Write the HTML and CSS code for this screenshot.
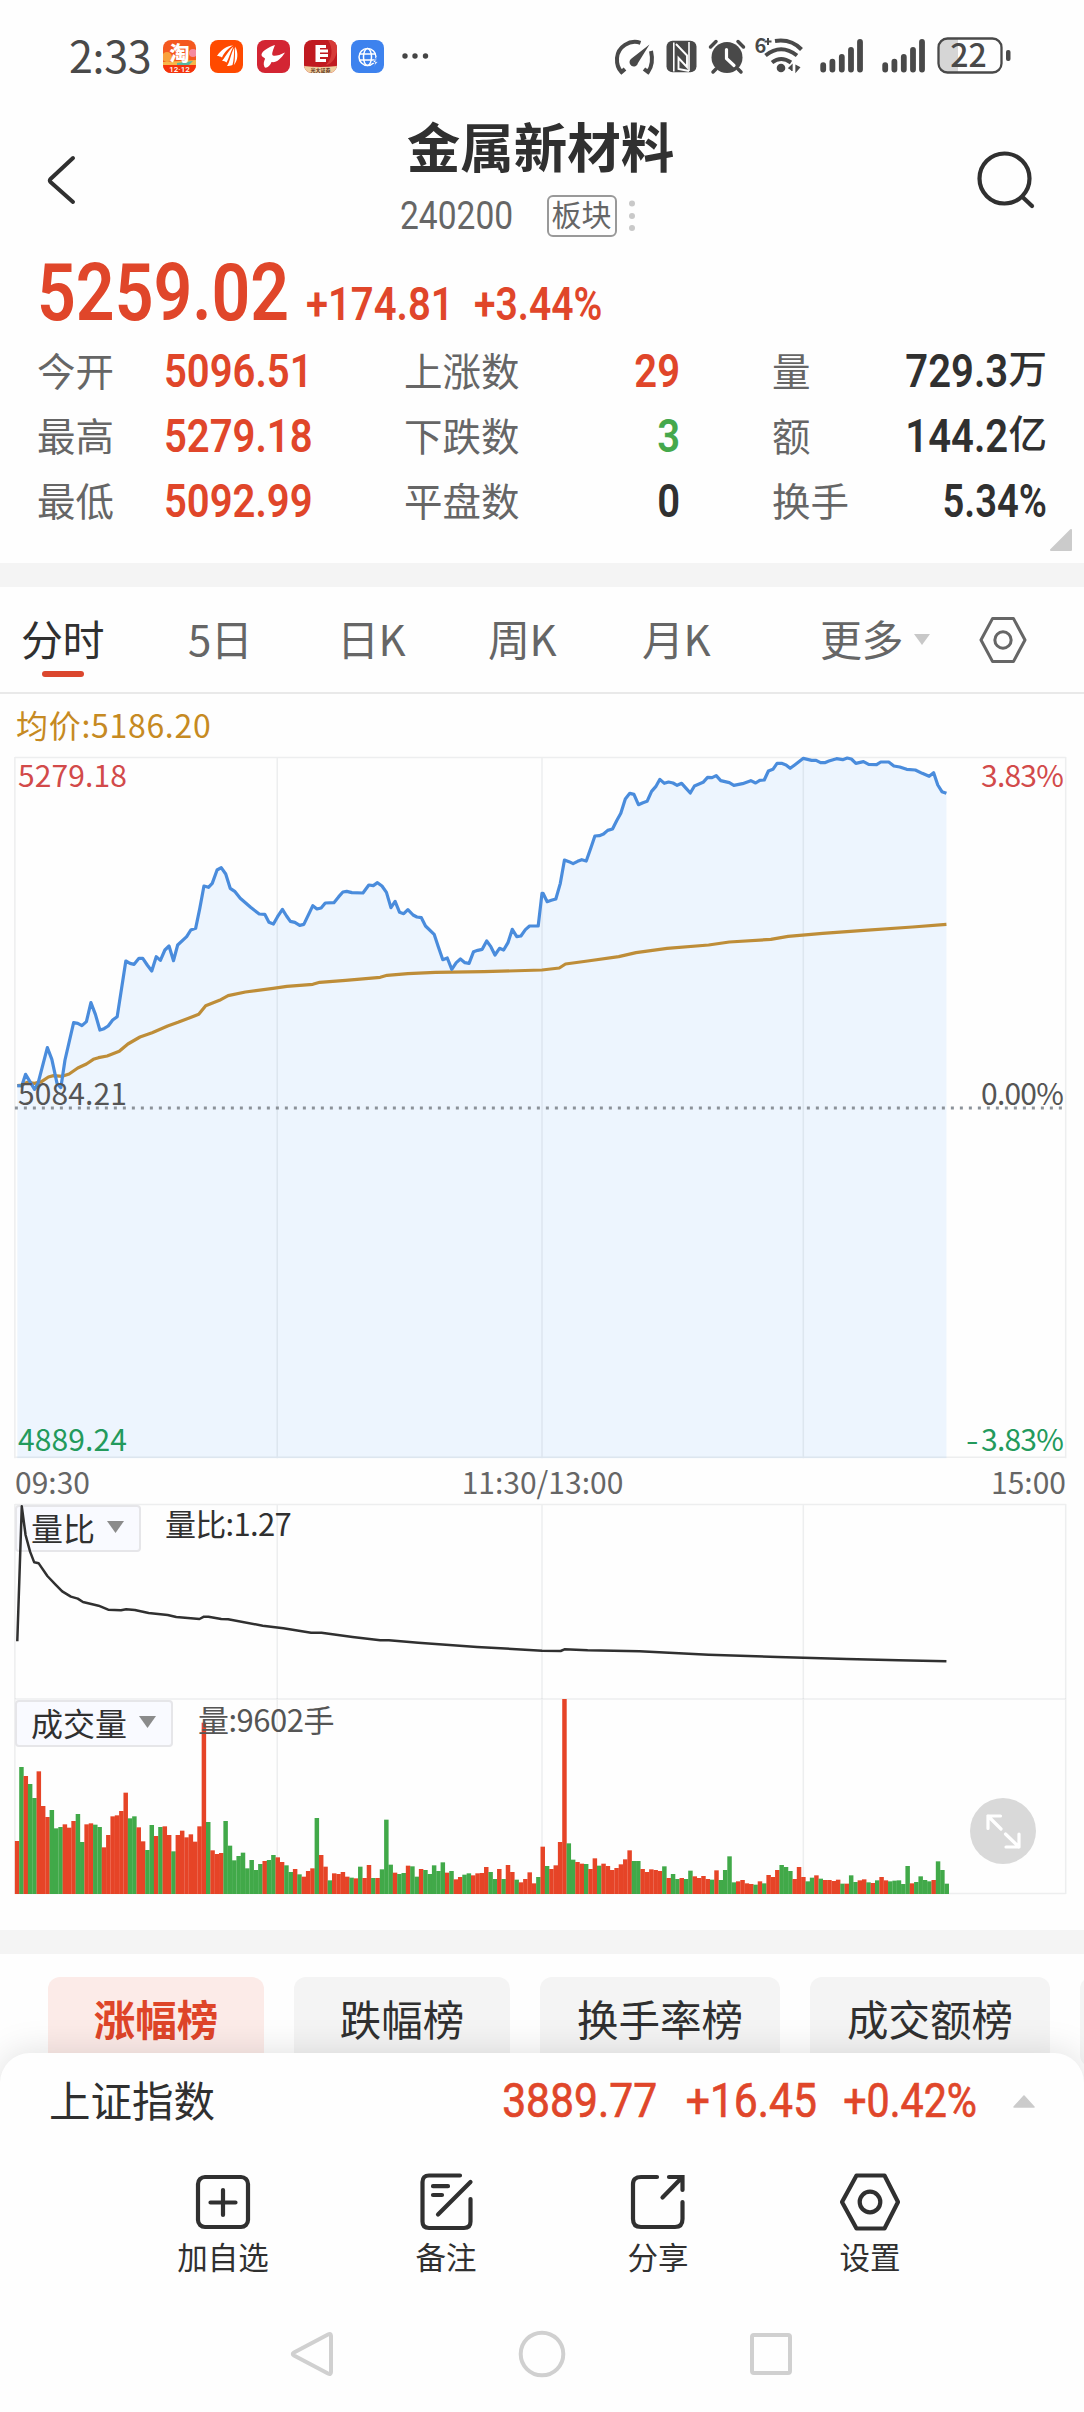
FILE: index.html
```html
<!DOCTYPE html>
<html lang="zh-CN">
<head>
<meta charset="utf-8">
<title>金属新材料 240200</title>
<link rel="stylesheet" href="styles.css">
</head>
<body>
<div class="screen">

  <div class="statusbar">
    <span class="clock">2:33</span>
    <div class="apps">
      <svg viewBox="0 0 33 33" class="app">
        <defs><clipPath id="round"><rect width="33" height="33" rx="8"/></clipPath></defs>
        <g clip-path="url(#round)">
          <rect width="33" height="33" fill="#f4581f"/>
          <circle cx="4" cy="17" r="5" fill="#f9a13c"/><circle cx="30" cy="13" r="4" fill="#f58aa0"/>
          <path d="M0 22l33-2v6H0z" fill="#f7b64a"/><path d="M14 23l16-2-4 4H14z" fill="#58b6a0"/>
          <rect y="25" width="33" height="8" fill="#f5330c"/>
          <text x="16.500" y="20.500" text-anchor="middle" class="app-tao">淘</text>
          <text x="16.500" y="32" text-anchor="middle" class="app-date">12·12</text>
        </g>
      </svg>
      <svg viewBox="0 0 33 33" class="app">
        <rect width="33" height="33" rx="8" fill="#ff4a00"/>
        <path d="M7 16C11 10 16 6 23 5.500C17 9 14 13 12 17.500C10.500 16.500 9 16 7 16zM12 20.500C14.500 19 17 12 23.500 6.500C20 13 19 18 16.500 22.500C15 21.500 14 21 12 20.500zM17 26C20 22 21 13 24.300 7.500C24 14 24 20 22.500 25C20.500 25.800 19 26 17 26zM24 25C25.500 19 24.500 13 25.300 6.500C28.500 13 28 20 24 25z" fill="#fff"/>
      </svg>
      <svg viewBox="0 0 33 33" class="app">
        <rect width="33" height="33" rx="8" fill="#d32533"/>
        <path d="M18 5C12 7 5 11 4.500 14.500C4.500 17.500 8 17 8 19C7 21 6 24 7.500 27C9 29 13 26 14.500 22C19 23 24 19 28 12.500C23 15 18 16.500 16 15.500C14 14.500 16.500 9 18 5z" fill="#fff"/>
      </svg>
      <svg viewBox="0 0 33 33" class="app">
        <g clip-path="url(#round)">
          <rect width="33" height="33" fill="#c01a20"/>
          <path d="M24 0h9v12C31 20 26 25 22 25C29 18 29 8 24 0z" fill="#d63a37"/>
          <path d="M11.500 5h10.500v3h-6v1.500h8v3h-8V14h8v3h-8v2h6v3H11.500z" fill="#fff"/>
          <path d="M0 26Q16 28 33 26v7H0z" fill="#efcf9f"/>
          <text x="16.500" y="32" text-anchor="middle" class="app-sec">光大证券</text>
        </g>
      </svg>
      <svg viewBox="0 0 33 33" class="app">
        <rect width="33" height="33" rx="8" fill="#3d82ee"/>
        <g fill="none" stroke="#fff" stroke-width="1.500">
          <circle cx="16.500" cy="17" r="8.500"/><ellipse cx="16.500" cy="17" rx="4" ry="8.500"/><path d="M8.500 14h16M8.500 20h16"/>
        </g>
        <path d="M25.500 17.500l-4 5h2.500l-1 4 4-5h-2.500z" fill="#fff" stroke="#3d82ee" stroke-width=".8"/>
      </svg>
    </div>
    <svg class="more-dots" viewBox="0 0 26 6"><g fill="#454545"><circle cx="3" cy="3" r="2.700"/><circle cx="13" cy="3" r="2.700"/><circle cx="23.500" cy="3" r="2.700"/></g></svg>

    <svg class="sys" viewBox="70 34 402 42">
      <g fill="none" stroke="#494949" stroke-width="4" stroke-linecap="butt">
        <path d="M83 69L79.500 72Q74.500 67 75 58A18 17.500 0 0 1 98.500 42.800"/>
        <path d="M109 51Q112 64 106 72L102 69"/>
      </g>
      <path d="M107.500 44.500L96 63A4.300 4.300 0 1 1 89.500 58.500z" fill="#494949"/>
      <rect x="124.500" y="40.700" width="30" height="31.500" rx="6" fill="#494949"/>
      <path d="M131.800 42.500V71.500M147 42V71" stroke="#fff" stroke-width="1.600"/>
      <path d="M134 44L145 55.500V67L136.500 58V69L147 71" fill="none" stroke="#fff" stroke-width="1.900"/>
      <circle cx="185" cy="57.500" r="15.500" fill="#494949"/>
      <path d="M168.500 47l5.500-5.500M201.500 47l-5.500-5.500M174 69l-3 3M196 69l3 3" stroke="#494949" stroke-width="3.500" stroke-linecap="round"/>
      <path d="M184.500 49.500v9l7.500 7" fill="none" stroke="#fff" stroke-width="3.200" stroke-linecap="round" stroke-linejoin="round"/>
      <text x="212.500" y="52.500" class="wifi-gen">6</text>
      <path d="M222.500 41.500h7M226 38v7" stroke="#494949" stroke-width="2"/>
      <g fill="none" stroke="#494949" stroke-width="4">
        <path d="M233 41Q249 38.500 259.500 49.500"/>
        <path d="M223.500 55.500Q239 43 255 55.500"/>
        <path d="M230 62.500Q239 55.500 249 62.500"/>
      </g>
      <circle cx="239" cy="68" r="4.300" fill="#494949"/>
      <path d="M246.500 68.500l3.500-3.500v6M254 65.500v6l3.500-4z" fill="#494949" stroke="#494949" stroke-width="1.300"/>
      <g stroke="#494949" stroke-width="5.800" stroke-linecap="round">
        <path d="M281.200 65.200V69.500M290.400 61.700V69.500M299.800 57V69.500M309 50V69.500M318 42V69.500"/>
        <path d="M343.200 65.200V69.500M352.400 61.700V69.500M361.800 57V69.500M371 50V69.500M380 42V69.500"/>
      </g>
      <path d="M405 39h11v33h-11q-8 0-8-8V47q0-8 8-8z" fill="#d6d6d6"/>
      <rect x="396.500" y="38.500" width="63" height="34" rx="9" fill="none" stroke="#494949" stroke-width="2.300"/>
      <rect x="464" y="50" width="4.500" height="11" rx="2" fill="#494949"/>
      <text x="426.500" y="67" text-anchor="middle" class="battery">22</text>
    </svg>
  </div>

  <div class="header">
    <svg class="back" viewBox="0 0 32 54"><path d="M27 5L4.500 26Q3 27.500 4.500 29L27 49" fill="none" stroke="#303030" stroke-width="4" stroke-linecap="round"/></svg>
    <div class="heading">
      <h1>金属新材料</h1>
      <div class="sub">
        <span class="code">240200</span>
        <span class="tag">板块</span>
        <svg class="vdots" viewBox="0 0 6 32"><g fill="#c9c9c9"><circle cx="3" cy="3.500" r="3"/><circle cx="3" cy="16" r="3"/><circle cx="3" cy="28" r="3"/></g></svg>
      </div>
    </div>
    <svg class="search" viewBox="0 0 60 62"><g fill="none" stroke="#303030" stroke-width="4.200" stroke-linecap="round"><circle cx="29.500" cy="29.500" r="25"/><path d="M48 48.500L57 57"/></g></svg>
  </div>

  <div class="quote">
    <div class="price-row">
      <span class="last num">5259.02</span>
      <span class="diff num">+174.81</span>
      <span class="pct num">+3.44%</span>
    </div>
    <div class="stats">
      <span class="lab">今开</span><span class="num up">5096.51</span>
      <span class="lab">上涨数</span><span class="num r up">29</span>
      <span class="lab third">量</span><span class="val"><span class="num r">729.3</span><span class="unit">万</span></span>
      <span class="lab">最高</span><span class="num up">5279.18</span>
      <span class="lab">下跌数</span><span class="num r down">3</span>
      <span class="lab third">额</span><span class="val"><span class="num r">144.2</span><span class="unit">亿</span></span>
      <span class="lab">最低</span><span class="num up">5092.99</span>
      <span class="lab">平盘数</span><span class="num r">0</span>
      <span class="lab third">换手</span><span class="num r turnover">5.34%</span>
    </div>
    <svg class="corner" viewBox="0 0 22 22"><path d="M21 1v20H1z" fill="#cbcbcb" stroke="#cbcbcb" stroke-width="2" stroke-linejoin="round"/></svg>
  </div>

  <div class="band"></div>

  <div class="tabs">
    <span class="tab active">分时</span>
    <span class="tab">5日</span>
    <span class="tab">日K</span>
    <span class="tab">周K</span>
    <span class="tab">月K</span>
    <span class="tab">更多</span>
    <svg class="drop" viewBox="0 0 16 11"><path d="M0 0h16L8 11z" fill="#c8c8c8"/></svg>
    <svg class="gear" viewBox="0 0 60 60"><g fill="none" stroke="#666" stroke-width="3.800" stroke-linejoin="round"><path d="M17 3h26L57.500 30L43 57H17L2.500 30z"/><circle cx="30" cy="30" r="10.200"/></g></svg>
  </div>

  <div class="avg">均价:5186.20</div>

  <div class="panel price-panel">
    <svg viewBox="0 171 3136 2106" preserveAspectRatio="none" class="plot">
      <path id="area" fill="#edf5fe"/>
      <g class="grid"><path d="M43 172.500H3083M43 2272H3083M43 171V2275M802 171V2275M1568 171V2275M2324 171V2275M3083 171V2275"/></g>
      <polyline id="avgline" class="line" stroke="#be8d38"/>
      <polyline id="priceline" class="line" stroke="#4a8cdc"/>
      <path d="M43 1224H3073" class="zero"/>
    </svg>
    <span class="mark top left red">5279.18</span>
    <span class="mark top right red">3.83%</span>
    <span class="mark mid left">5084.21</span>
    <span class="mark mid right">0.00%</span>
    <span class="mark low left green">4889.24</span>
    <span class="mark low right green"><span class="minus">-</span>3.83%</span>
  </div>

  <div class="times"><span>09:30</span><span class="noon">11:30/13:00</span><span>15:00</span></div>

  <div class="panel ratio-panel">
    <svg viewBox="0 252 3136 585" preserveAspectRatio="none" class="plot">
      <g class="grid"><path d="M43 253.500H3083M43 252V837M802 252V837M1568 252V837M2324 252V837M3083 252V837"/></g>
    </svg>
    <div class="picker"><span>量比</span><svg viewBox="0 0 17 12"><path d="M0 0h17L8.500 12z" fill="#8b8b8b"/></svg></div>
    <span class="reading">量比:1.27</span>
    <svg viewBox="0 252 3136 585" preserveAspectRatio="none" class="plot">
      <polyline id="ratioline" class="line thin" stroke="#303030"/>
    </svg>
  </div>

  <div class="panel vol-panel">
    <svg viewBox="0 837 3136 585" preserveAspectRatio="none" class="plot">
      <g class="grid"><path d="M43 837H3083M43 1420.500H3083M43 837V1422M802 837V1422M1568 837V1422M2324 837V1422M3083 837V1422"/></g>
      <g id="bars"></g>
    </svg>
    <div class="picker"><span>成交量</span><svg viewBox="0 0 17 12"><path d="M0 0h17L8.500 12z" fill="#8b8b8b"/></svg></div>
    <span class="reading gray">量:9602手</span>
    <svg class="expand" viewBox="0 0 66 66"><circle cx="33" cy="33" r="33" fill="#d9d9d9"/><g fill="none" stroke="#fff" stroke-width="3.200" stroke-linecap="round" stroke-linejoin="round"><path d="M30.500 18H18V30.500M18 18L31 31M36 49H49V36M49 49L35.500 36"/></g></svg>
  </div>

  <div class="band second"></div>

  <div class="chips">
    <span class="chip on">涨幅榜</span>
    <span class="chip">跌幅榜</span>
    <span class="chip wide">换手率榜</span>
    <span class="chip wide">成交额榜</span>
    <span class="chip"></span>
  </div>

  <div class="sheet">
    <div class="index-row">
      <span class="index-name">上证指数</span>
      <span class="num r i1">3889.77</span>
      <span class="num r i2">+16.45</span>
      <span class="num r i3">+0.42%</span>
      <svg class="up-tri" viewBox="0 0 22 13"><path d="M11 1L21 12H1z" fill="#cbcbcb" stroke="#cbcbcb" stroke-width="1.500" stroke-linejoin="round"/></svg>
    </div>
    <div class="actions">
      <div class="action"><svg viewBox="0 0 60 60"><g fill="none" stroke="#303030" stroke-width="4.200" stroke-linecap="round"><rect x="5" y="5" width="50" height="50" rx="7"/><path d="M30 18v25M17.500 30.500h25"/></g></svg><span>加自选</span></div>
      <div class="action"><svg viewBox="0 0 60 60"><g fill="none" stroke="#303030" stroke-width="4.200" stroke-linecap="round" stroke-linejoin="round"><path d="M44 3.500H13Q6.500 3.500 6.500 10V49.500Q6.500 56 13 56H48Q54.500 56 54.500 49.500V27"/><path d="M54.500 10L22 42.500M17 14.200h15M17 23h9"/></g></svg><span>备注</span></div>
      <div class="action"><svg viewBox="0 0 60 60"><g fill="none" stroke="#303030" stroke-width="4.200" stroke-linecap="round"><path d="M29 5H13Q5 5 5 12V47Q5 55 13 55H47Q54.500 55 54.500 47V30"/><path d="M41 5H54.500V18M54 5.500L34.500 25.500"/></g></svg><span>分享</span></div>
      <div class="action"><svg viewBox="0 0 60 60"><g fill="none" stroke="#303030" stroke-width="4.200" stroke-linejoin="round"><path d="M16.500 3.500h28L58 30L44.500 56.500h-28L2 30z"/><circle cx="30" cy="30" r="10.300"/></g></svg><span>设置</span></div>
    </div>
    <div class="navbar">
      <svg viewBox="0 0 48 48"><path d="M40 4.500Q43 3 43 6V42Q43 45 40 43.500L6 25.500Q3.500 24 6 22.500z" fill="none" stroke="#d0d0d0" stroke-width="4"/></svg>
      <svg viewBox="0 0 48 48"><circle cx="24" cy="24" r="21.300" fill="none" stroke="#d0d0d0" stroke-width="4"/></svg>
      <svg viewBox="0 0 48 48"><rect x="5" y="5" width="38" height="38" rx="2" fill="none" stroke="#d0d0d0" stroke-width="4"/></svg>
    </div>
  </div>
</div>
<script src="chart.js"></script>
</body>
</html>
```

FILE: styles.css
```css
* { box-sizing: border-box; }
body { margin: 0; background: #fff; color: #303030; font-family: "Noto Sans CJK SC", sans-serif; }
.screen { position: relative; width: 1084px; height: 2412px; overflow: hidden; background: #fefefe; display: flex; flex-direction: column; }
.screen > * { flex: none; }
svg { display: block; overflow: visible; }
span { white-space: nowrap; }

.num { display: block; font-family: Roboto, "Noto Sans CJK SC", sans-serif; transform: scaleX(.87); transform-origin: left center; }
.num.r { transform-origin: right center; text-align: right; }
.up { color: #e0462a; }
.down { color: #45a84c; }

/* status bar */
.statusbar { height: 112px; display: flex; align-items: center; padding: 0 74px 0 69px; }
.clock { font-size: 43px; line-height: 50px; width: 94px; color: #494949; letter-spacing: -.3px; margin-top: -5px; }
.apps { display: flex; gap: 14px; }
.app { width: 33px; height: 33px; }
.app-tao { font: 900 20px "Noto Sans CJK SC", sans-serif; fill: #fff; }
.app-date { font: 500 8px Roboto, sans-serif; fill: #fff; }
.app-sec { font: 700 5px "Noto Sans CJK SC", sans-serif; fill: #5a3018; }
.more-dots { width: 26px; height: 6px; margin-left: 18px; }
.sys { width: 402px; height: 42px; margin-left: auto; margin-right: -4px; margin-top: -2px; }
.wifi-gen { font: 700 20px "Noto Sans CJK SC", sans-serif; fill: #494949; }
.battery { font: 500 32px "Noto Sans CJK SC", sans-serif; fill: #494949; }

/* header */
.header { height: 136px; display: flex; align-items: flex-start; padding: 0 49px 0 46px; }
.back { width: 32px; height: 54px; margin-top: 41px; }
.search { width: 60px; height: 62px; margin-top: 37px; }
.heading { flex: 1; display: flex; flex-direction: column; align-items: center; padding-left: 28px; }
h1 { margin: 0; font-size: 53.500px; line-height: 66px; font-weight: 700; }
.sub { width: 242px; height: 42px; margin: 17px 40px 0 0; display: flex; align-items: center; justify-content: flex-start; }
.code { font: 400 39.500px/42px Roboto, sans-serif; color: #666; width: 113px; transform: scaleX(.85); transform-origin: left center; }
.tag { width: 70px; height: 42px; margin-left: 34px; border: 2px solid #999; border-radius: 6px; font-size: 30px; line-height: 33px; text-align: center; color: #666; }
.vdots { width: 6px; height: 32px; margin-left: 12px; }

/* quote */
.quote { height: 315px; padding: 8px 37px 0 37px; position: relative; }
.price-row { height: 82px; display: flex; align-items: flex-end; color: #e0462a; font-weight: 700; }
.last { font-size: 79px; line-height: 82px; width: 269px; margin-bottom: 4px; font-weight: 600; transform: scaleX(.86); }
.diff, .pct { font-size: 46px; line-height: 56px; width: 168px; font-weight: 600; margin-bottom: 6px; }
.pct { width: 150px; transform: scaleX(.85); }
.stats { display: grid; grid-template-columns: 127px 240px 122px 154px 186px 181px; grid-auto-rows: 65px; align-items: center; }
.stats .lab { font-size: 38.500px; line-height: 60px; color: #666; margin-top: -4px; }
.stats .third { padding-left: 92px; }
.stats .num { font-size: 46px; line-height: 60px; font-weight: 600; }
.stats .turnover { transform: scaleX(.83); }
.val { display: flex; justify-content: flex-end; }
.unit { font-size: 38.500px; line-height: 60px; font-weight: 500; margin-top: -5px; }
.corner { position: absolute; left: 1050px; top: 281px; width: 22px; height: 22px; }

.band { height: 24px; background: #f4f4f4; }

/* period tabs */
.tabs { height: 107px; border-bottom: 2px solid #e9e9e9; display: grid; grid-template-columns: 167px 149px 151px 154px 178px 94px 65px 48px; padding-left: 21px; align-items: center; color: #666; }
.tab { font-size: 42px; line-height: 60px; margin-top: -3px; letter-spacing: -.5px; }
.tab.active { color: #303030; position: relative; }
.tab.active::after { content: ""; position: absolute; left: 21px; top: 63px; width: 42px; height: 6px; border-radius: 3px; background: #db472e; }
.drop { width: 16px; height: 11px; }
.gear { width: 48px; height: 48px; margin-top: 1px; }

.avg { height: 63px; padding-left: 16px; font-size: 32px; line-height: 61px; letter-spacing: .7px; color: #c68a22; }

/* chart panels */
.panel { position: relative; }
.price-panel { height: 702px; }
.ratio-panel, .vol-panel { height: 195px; }
.plot { position: absolute; inset: 0; width: 1084px; height: 100%; }
.grid path { fill: none; stroke: #5a6470; stroke-opacity: .1; stroke-width: 1.500px; vector-effect: non-scaling-stroke; }
.line { fill: none; stroke-width: 3.200px; stroke-linejoin: round; vector-effect: non-scaling-stroke; }
.line.thin { stroke-width: 2.500px; }
.zero { stroke: #8c9299; stroke-width: 2.800px; stroke-dasharray: 3px 6px; vector-effect: non-scaling-stroke; }
.mark { position: absolute; font-size: 30px; line-height: 40px; color: #555; letter-spacing: .1px; }
.left { left: 18px; }
.right { right: 21px; letter-spacing: -.8px; }
.minus { display: inline-block; margin-right: 4px; transform: scaleX(1.200); }
.top { top: -3px; }
.mid { top: 315px; }
.low { top: 661px; }
.red { color: #d24a4a; }
.green { color: #239a5c; }
.times { height: 45px; padding: 0 18px 0 15px; display: flex; justify-content: space-between; font-size: 30px; line-height: 45px; color: #666; }
.noon { padding-left: 4px; }
.picker { position: absolute; left: 15px; top: 1px; height: 47px; padding: 0 15px 0 14px; display: flex; align-items: center; gap: 12px; background: #f9faff; border: 2px solid #e6e6e9; border-radius: 4px; font-size: 32px; line-height: 40px; }
.picker span { margin-top: -3px; }
.picker svg { width: 17px; height: 12px; margin-top: -3px; }
.reading { position: absolute; left: 165px; top: -2px; font-size: 31px; line-height: 42px; letter-spacing: -.7px; }
.vol-panel .reading { left: 198px; top: -1px; letter-spacing: -.5px; }
.gray { color: #555; }
.expand { position: absolute; left: 970px; top: 99px; width: 66px; height: 66px; }

.band.second { margin-top: 36px; }

/* ranking chips */
.chips { margin-top: 23px; padding-left: 48px; display: flex; gap: 30px; }
.chip { flex: none; width: 216px; height: 90px; border-radius: 12px; background: #f4f4f4; font-size: 41.500px; line-height: 82px; text-align: center; }
.chip.wide { width: 240px; }
.chip.on { background: #fcebe8; color: #de4529; font-weight: 700; }

/* bottom sheet */
.sheet { position: absolute; left: 0; right: 0; top: 2053px; height: 359px; background: #fefefe; border-radius: 30px 30px 0 0; box-shadow: 0 0 36px rgba(0, 0, 0, .13); }
.index-row { height: 96px; display: flex; align-items: center; padding: 0 49px 0 49px; color: #e0462a; }
.index-name { font-size: 41.500px; line-height: 60px; color: #303030; margin-top: -5px; margin-right: auto; }
.index-row .num { font-size: 49px; line-height: 60px; font-weight: 400; -webkit-text-stroke: .7px currentColor; }
.i2, .i3 { width: 160px; }
.index-row .i3 { margin-right: 36px; transform: scaleX(.84); }
.up-tri { width: 22px; height: 13px; }
.actions { height: 181px; display: flex; padding: 23px 0 0 117px; }
.action { width: 212px; display: flex; flex-direction: column; align-items: center; font-size: 30.500px; line-height: 44px; }
.action:first-child { margin-right: 11px; }
.action svg { width: 60px; height: 60px; }
.action span { margin-top: 2px; }
.navbar { display: flex; justify-content: space-between; padding: 0 289px 0 288px; }
.navbar svg { width: 48px; height: 48px; }
```

FILE: chart.js
```js
// Plot units: 3136 wide, three units per pixel high.
const price = "50,1157 63,1158 74,1123 100,1168 110,1150 137,1043 150,1078 165,1150 176,1163 188,1080 213,968 225,970 237,977 250,965 263,908 276,943 289,990 301,986 313,978 326,960 339,950 364,783 376,790 388,793 402,775 413,775 426,795 439,813 452,770 464,781 477,750 489,738 502,782 514,735 540,710 552,690 566,685 578,625 590,558 603,562 614,550 628,510 640,503 653,522 666,565 680,575 695,595 725,622 750,642 766,643 778,667 791,672 803,650 817,628 829,648 840,664 853,667 867,676 879,673 905,617 917,627 929,624 941,609 966,608 980,590 992,576 1003,574 1018,578 1050,579 1067,555 1080,557 1092,548 1105,558 1118,577 1131,623 1143,604 1156,637 1168,641 1180,629 1195,645 1206,651 1219,653 1231,678 1256,703 1268,740 1281,779 1294,774 1307,808 1320,788 1332,777 1345,788 1357,790 1370,755 1382,751 1395,748 1408,723 1420,740 1432,765 1445,745 1457,750 1470,727 1482,688 1495,710 1507,708 1520,689 1532,678 1557,678 1568,580 1571,580 1583,605 1595,601 1608,597 1621,550 1633,480 1646,485 1658,491 1671,484 1683,479 1696,483 1709,445 1721,408 1734,407 1746,402 1758,391 1772,387 1784,362 1796,340 1809,297 1822,280 1834,283 1847,314 1860,308 1872,304 1885,274 1897,260 1909,238 1922,250 1934,246 1947,249 1959,256 1972,250 1985,265 1997,279 2009,258 2034,247 2047,232 2060,233 2072,227 2085,242 2110,248 2123,256 2148,251 2172,242 2186,249 2198,241 2211,240 2223,213 2236,208 2248,190 2261,190 2274,195 2286,205 2299,195 2324,175 2348,181 2361,181 2374,188 2386,188 2398,183 2420,176 2438,179 2451,174 2463,177 2476,190 2498,185 2513,193 2536,194 2548,186 2571,186 2586,198 2603,201 2623,208 2648,210 2668,220 2688,229 2701,218 2713,255 2725,275 2738,280";
const average = "50,1157 63,1155 78,1147 100,1150 120,1145 140,1131 155,1127 180,1129 200,1122 225,1104 250,1092 270,1078 285,1073 310,1068 345,1054 370,1032 405,1011 440,998 485,978 515,967 575,943 595,917 635,901 660,887 710,876 790,865 830,859 905,853 925,847 1000,841 1100,832 1120,826 1180,821 1260,817 1400,815 1568,810 1618,804 1636,792 1700,783 1790,770 1840,758 1930,745 2050,735 2110,726 2230,718 2280,709 2380,700 2500,691 2640,681 2738,673";
const ratio = "50,664 63,259 74,345 87,395 99,427 112,430 137,468 160,493 180,514 205,530 225,536 240,546 285,557 313,569 350,571 365,568 390,570 430,579 485,585 510,591 577,597 590,590 603,590 640,597 660,598 760,617 820,625 900,638 930,638 1020,651 1100,661 1125,661 1210,668 1380,681 1568,692 1622,693 1633,688 1700,691 1850,694 2050,704 2250,711 2450,717 2600,721 2738,724";

document.getElementById("priceline").setAttribute("points", price);
document.getElementById("avgline").setAttribute("points", average);
document.getElementById("ratioline").setAttribute("points", ratio);
document.getElementById("area").setAttribute("d", "M" + price.replace(/ /g, "L") + "V2275H50Z");

// One entry per minute: direction and bar top.
const volume = "R1263 G1041 R1068 G1092 G1134 R1054 R1158 R1191 G1170 G1225 G1221 R1213 R1223 R1203 G1182 G1266 R1213 R1210 G1214 G1221 R1282 R1245 R1189 R1186 R1173 R1118 G1195 G1189 R1222 R1264 G1290 G1215 R1248 G1221 R1219 R1245 G1294 R1245 R1232 R1252 R1243 R1265 R1219 R908 G1206 R1291 R1302 R1299 G1203 G1277 G1321 G1308 G1298 G1345 G1320 G1350 G1332 R1323 G1320 G1305 R1312 R1326 G1336 G1356 R1347 G1363 R1370 R1353 R1345 G1194 R1305 R1340 G1381 R1360 R1362 R1356 R1370 G1373 R1375 G1340 R1374 R1335 G1374 R1374 G1348 G1199 G1334 R1358 G1362 G1359 R1337 G1339 G1370 R1347 G1350 G1362 G1336 G1353 G1327 R1358 G1353 R1378 R1371 G1364 G1360 R1366 R1360 R1359 R1341 G1356 G1377 R1347 G1377 R1335 R1356 G1379 R1387 R1377 R1357 R1390 G1371 R1280 G1338 R1347 R1336 R1266 R837 G1270 G1319 R1326 R1331 G1332 R1347 R1315 G1337 R1331 R1338 R1350 R1344 R1333 R1318 R1291 G1323 G1323 R1347 R1356 R1348 R1350 R1353 G1339 R1374 G1362 G1377 R1374 G1377 G1352 R1369 R1374 R1368 R1377 G1379 R1351 G1380 G1350 G1309 G1387 R1384 R1380 R1390 R1392 G1394 R1384 G1390 R1365 R1371 R1350 G1335 G1341 G1353 R1377 R1341 R1371 G1384 G1373 R1366 G1376 R1380 R1380 R1383 R1379 G1391 R1391 G1366 G1386 R1381 R1378 G1387 R1389 G1381 R1371 R1381 G1384 G1382 G1381 G1392 G1338 R1390 G1386 G1369 G1380 G1384 R1380 G1324 G1350 G1391".split(" ");
const step = 2702 / volume.length;
const bars = document.getElementById("bars");
volume.forEach((entry, i) => {
  const top = Number(entry.slice(1));
  const bar = document.createElementNS("http://www.w3.org/2000/svg", "rect");
  bar.setAttribute("x", 43 + i * step);
  bar.setAttribute("y", top);
  bar.setAttribute("width", step + 0.4);
  bar.setAttribute("height", 1422 - top);
  bar.setAttribute("fill", entry[0] === "R" ? "#e64427" : "#41a949");
  bars.appendChild(bar);
});
```
